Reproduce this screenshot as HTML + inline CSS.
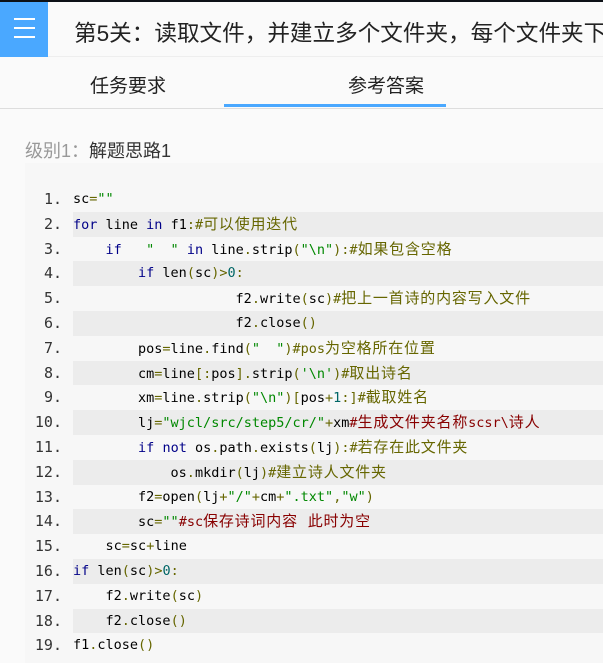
<!DOCTYPE html>
<html><head><meta charset="utf-8">
<style>
*{margin:0;padding:0;box-sizing:border-box}
body{width:603px;height:654px;overflow:hidden;background:#fafafa;font-family:"Liberation Sans","Noto Sans CJK SC",sans-serif;position:relative}
.top{position:absolute;left:0;top:0;width:603px;height:2px;background:#0d1117}
.hdr{position:absolute;left:0;top:2px;width:603px;height:55px;background:#fafafa;border-bottom:1px solid #eee}
.menu{position:absolute;left:0;top:0;width:48px;height:55px;background:#4aa8ff}
.menu i{position:absolute;left:14px;width:21px;height:2px;background:#fff}
.title{position:absolute;left:74px;top:13px;font-size:22.6px;color:#222;white-space:nowrap}
.tabs{position:absolute;left:0;top:57px;width:603px;height:52px;border-bottom:1px solid #ddd}
.tab{position:absolute;top:14px;font-size:19px;color:#222}
.ul{position:absolute;left:224px;top:47px;width:222px;height:3px;background:#4aa8ff}
.h{position:absolute;left:25px;top:137px;font-size:18px;color:#333}
.h span{color:#999}
.box{position:absolute;left:25px;top:163px;width:600px;height:500px;background:#f7f7f7}
.ln{position:absolute;left:0;width:603px;height:24.8px;font-family:"DejaVu Sans Mono","Noto Sans CJK SC",monospace;font-size:13.5px;line-height:24.8px;white-space:pre}
.ln .n{position:absolute;right:541px;color:#333;font-size:15px;font-family:"DejaVu Sans Mono",monospace}
.ln .c{position:absolute;left:73px;right:0;top:0;height:24.8px}
.z .c{background:#ececec}
.k{color:#008}.s{color:#080}.p{color:#660}.m{color:#800}.d{color:#066}
.cj{font-size:15px;letter-spacing:0.8px}
</style></head><body>
<div class="top"></div>
<div class="hdr"><div class="menu"><i style="top:16px"></i><i style="top:25px"></i><i style="top:34px"></i></div>
<div class="title">第5关：读取文件，并建立多个文件夹，每个文件夹下</div></div>
<div class="tabs"><div class="tab" style="left:90px">任务要求</div><div class="tab" style="left:348px">参考答案</div><div class="ul"></div></div>
<div class="h"><span>级别1：</span>解题思路1</div>
<div class="box"></div>

<div class="ln" style="top:187px"><span class="n">1.</span><span class="c">sc<span class="p">=</span><span class="s">""</span></span></div>
<div class="ln z" style="top:211.8px"><span class="n">2.</span><span class="c"><span class="k">for</span> line <span class="k">in</span> f1<span class="p">:#<span class="cj">可以使用迭代</span></span></span></div>
<div class="ln" style="top:236.6px"><span class="n">3.</span><span class="c">    <span class="k">if</span>   <span class="s">"  "</span> <span class="k">in</span> line<span class="p">.</span>strip<span class="p">(</span><span class="s">"\n"</span><span class="p">):#<span class="cj">如果包含空格</span></span></span></div>
<div class="ln z" style="top:261.4px"><span class="n">4.</span><span class="c">        <span class="k">if</span> len<span class="p">(</span>sc<span class="p">)&gt;</span><span class="d">0</span><span class="p">:</span></span></div>
<div class="ln" style="top:286.2px"><span class="n">5.</span><span class="c">                    f2<span class="p">.</span>write<span class="p">(</span>sc<span class="p">)#<span class="cj">把上一首诗的内容写入文件</span></span></span></div>
<div class="ln z" style="top:311px"><span class="n">6.</span><span class="c">                    f2<span class="p">.</span>close<span class="p">()</span></span></div>
<div class="ln" style="top:335.8px"><span class="n">7.</span><span class="c">        pos<span class="p">=</span>line<span class="p">.</span>find<span class="p">(</span><span class="s">"  "</span><span class="p">)#pos<span class="cj">为空格所在位置</span></span></span></div>
<div class="ln z" style="top:360.6px"><span class="n">8.</span><span class="c">        cm<span class="p">=</span>line<span class="p">[:</span>pos<span class="p">].</span>strip<span class="p">(</span><span class="s">'\n'</span><span class="p">)#<span class="cj">取出诗名</span></span></span></div>
<div class="ln" style="top:385.4px"><span class="n">9.</span><span class="c">        xm<span class="p">=</span>line<span class="p">.</span>strip<span class="p">(</span><span class="s">"\n"</span><span class="p">)[</span>pos<span class="p">+</span><span class="d">1</span><span class="p">:]#<span class="cj">截取姓名</span></span></span></div>
<div class="ln z" style="top:410.2px"><span class="n">10.</span><span class="c">        lj<span class="p">=</span><span class="s">"wjcl/src/step5/cr/"</span><span class="p">+</span>xm<span class="m">#<span class="cj">生成文件夹名称</span>scsr\<span class="cj">诗人</span></span></span></div>
<div class="ln" style="top:435px"><span class="n">11.</span><span class="c">        <span class="k">if</span> <span class="k">not</span> os<span class="p">.</span>path<span class="p">.</span>exists<span class="p">(</span>lj<span class="p">):#<span class="cj">若存在此文件夹</span></span></span></div>
<div class="ln z" style="top:459.8px"><span class="n">12.</span><span class="c">            os<span class="p">.</span>mkdir<span class="p">(</span>lj<span class="p">)#<span class="cj">建立诗人文件夹</span></span></span></div>
<div class="ln" style="top:484.6px"><span class="n">13.</span><span class="c">        f2<span class="p">=</span>open<span class="p">(</span>lj<span class="p">+</span><span class="s">"/"</span><span class="p">+</span>cm<span class="p">+</span><span class="s">".txt"</span><span class="p">,</span><span class="s">"w"</span><span class="p">)</span></span></div>
<div class="ln z" style="top:509.4px"><span class="n">14.</span><span class="c">        sc<span class="p">=</span><span class="s">""</span><span class="m">#sc<span class="cj">保存诗词内容 此时为空</span></span></span></div>
<div class="ln" style="top:534.2px"><span class="n">15.</span><span class="c">    sc<span class="p">=</span>sc<span class="p">+</span>line</span></div>
<div class="ln z" style="top:559px"><span class="n">16.</span><span class="c"><span class="k">if</span> len<span class="p">(</span>sc<span class="p">)&gt;</span><span class="d">0</span><span class="p">:</span></span></div>
<div class="ln" style="top:583.8px"><span class="n">17.</span><span class="c">    f2<span class="p">.</span>write<span class="p">(</span>sc<span class="p">)</span></span></div>
<div class="ln z" style="top:608.6px"><span class="n">18.</span><span class="c">    f2<span class="p">.</span>close<span class="p">()</span></span></div>
<div class="ln" style="top:633.4px"><span class="n">19.</span><span class="c">f1<span class="p">.</span>close<span class="p">()</span></span></div>
</body></html>
